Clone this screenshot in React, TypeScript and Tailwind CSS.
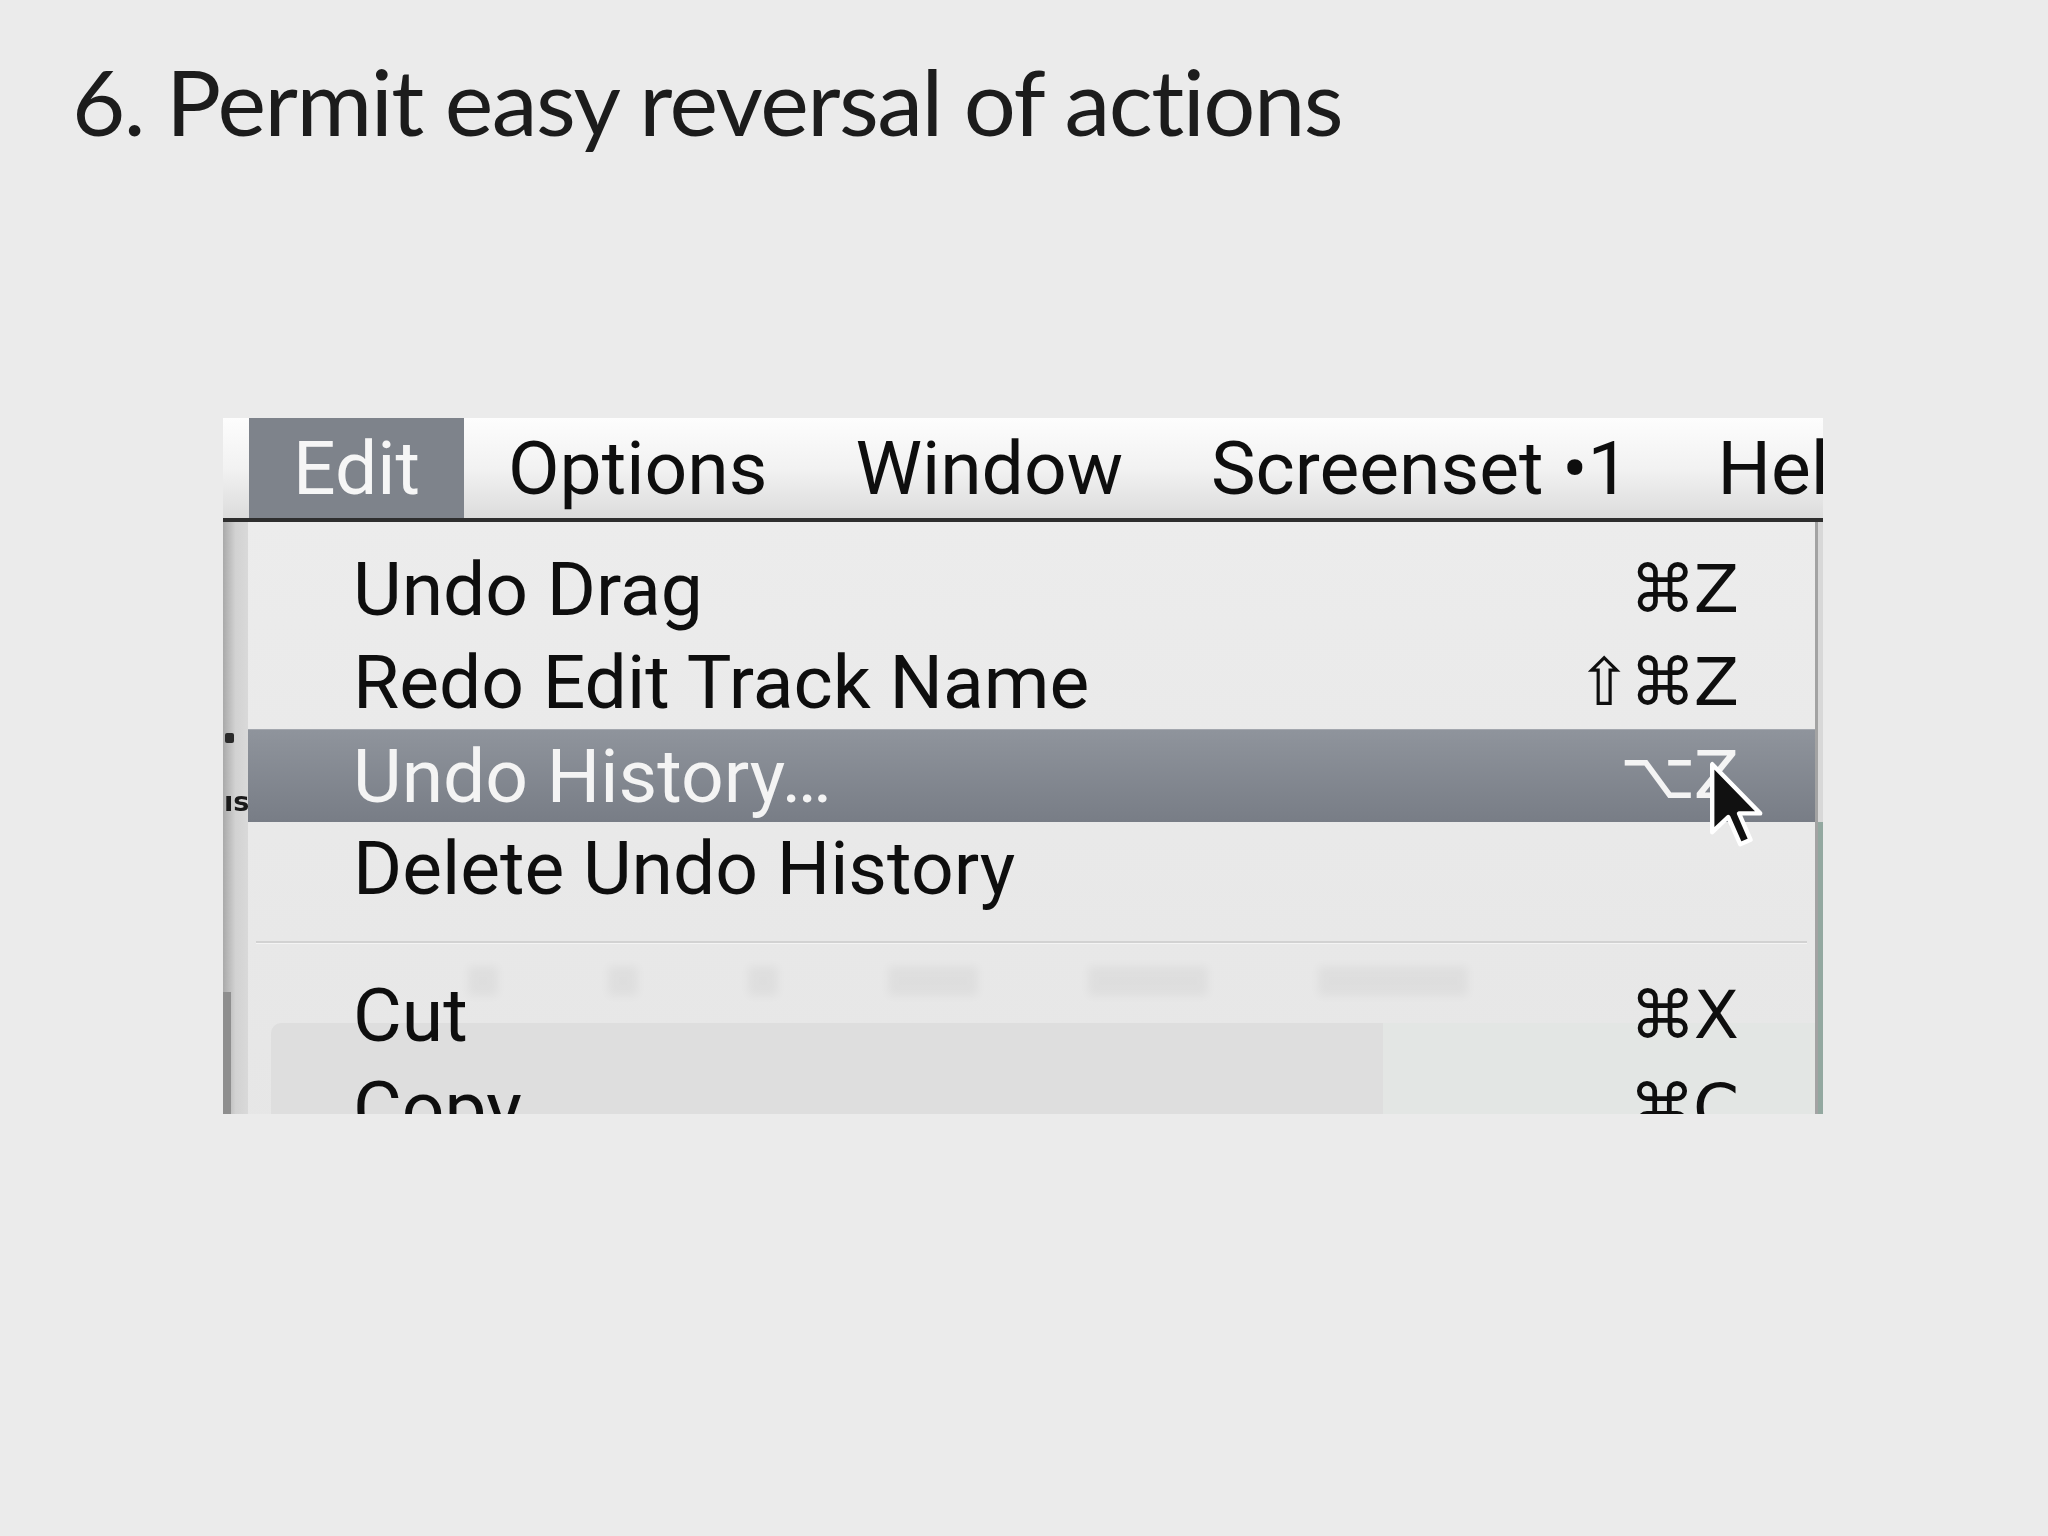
import React from "react";

const menuFont = "font-['Roboto','Liberation_Sans',sans-serif] font-normal";
const keyFont = "font-['DejaVu_Sans','Liberation_Sans',sans-serif]";

function Row({
  label,
  keys,
  active = false,
}: {
  label: string;
  keys?: string;
  active?: boolean;
}) {
  return (
    <div
      className={
        "h-[93px] flex items-center pl-[105px] pr-[78px] " +
        (active
          ? "bg-gradient-to-b from-[#8f949c] to-[#787d86] border-t border-[#a3a7ae] text-[#f4f4f4]"
          : "text-[#0e0e0e]")
      }
    >
      <span className={`${menuFont} text-[75px] leading-none flex-1 whitespace-nowrap`}>{label}</span>
      {keys && (
        <span className={`${keyFont} text-[66px] leading-none whitespace-nowrap tracking-[-2px]`}>{keys}</span>
      )}
    </div>
  );
}

function Cursor() {
  return (
    <svg
      className="absolute left-[1486px] top-[343px]"
      width="56"
      height="90"
      viewBox="-0.8 -0.8 14 22.5"
    >
      <path
        d="M0 0 L0 17 L4 13.2 L7 20 L9.6 18.9 L6.7 12.3 L12 12.3 Z"
        fill="#111"
        stroke="#fff"
        strokeWidth="1.1"
        strokeLinejoin="round"
      />
    </svg>
  );
}

export default function App() {
  return (
    <div className="w-[2048px] h-[1536px] bg-[#ebebeb] overflow-hidden">
      <h1 className="pl-[72px] pt-[55px] text-[92px] leading-none font-['Lato','Open_Sans',sans-serif] font-normal text-[#1c1c1c] tracking-[-1.5px] whitespace-nowrap">
        6. Permit easy reversal of actions
      </h1>

      <div className="ml-[223px] mt-[271px] w-[1600px] h-[696px] overflow-hidden relative flex flex-col blur-[0.5px]">
        {/* menu bar */}
        <div className="h-[104px] shrink-0 flex items-stretch bg-gradient-to-b from-[#fdfdfd] via-[#f2f2f2] to-[#dcdcdc] border-b-[4px] border-[#2e2e2e] pl-[26px]">
          <div className={`${menuFont} text-[75px] leading-none flex items-center px-[44px] bg-[#7e838b] text-[#f6f6f6]`}>
            Edit
          </div>
          {["Options", "Window", "Screenset \u20221", "Help"].map((t) => (
            <div
              key={t}
              className={`${menuFont} text-[75px] leading-none flex items-center px-[44px] text-[#0e0e0e] whitespace-nowrap`}
            >
              {t}
            </div>
          ))}
        </div>

        {/* content row */}
        <div className="flex-1 flex">
          {/* window behind, left edge */}
          <div className="w-[25px] shrink-0 relative bg-gradient-to-r from-[#a9a9a9] via-[#d2d2d2] to-[#d9d9d9]">
            <div className="absolute left-[2px] top-[211px] w-[9px] h-[10px] bg-[#2a2a2a] rounded-[2px]" />
            <span className="absolute left-[1px] top-[266px] font-['DejaVu_Sans',sans-serif] font-bold text-[27px] leading-none text-[#1a1a1a]">
              ıs
            </span>
            <div className="absolute left-0 top-[470px] w-[8px] h-[200px] bg-[#8e8e8e]" />
          </div>

          {/* dropdown panel */}
          <div className="flex-1 relative bg-gradient-to-b from-[#ececec] to-[#e6e6e6] pt-[21px]">
            {/* ghost of the window behind */}
            <div className="absolute left-[23px] right-[432px] top-[501px] bottom-0 bg-[#dedede] rounded-tl-[10px]" />
            <div className="absolute right-0 w-[432px] top-[501px] bottom-0 bg-[#e3e6e4]" />
            <div className="absolute left-[220px] right-[150px] top-[444px] h-[30px] flex gap-[110px] opacity-[0.035] blur-[5px]">
              <div className="w-[30px] h-full bg-black" />
              <div className="w-[30px] h-full bg-black" />
              <div className="w-[30px] h-full bg-black" />
              <div className="w-[90px] h-full bg-black" />
              <div className="w-[120px] h-full bg-black" />
              <div className="w-[150px] h-full bg-black" />
            </div>

            <div className="relative">
              <Row label="Undo Drag" keys={"\u2318Z"} />
              <Row label="Redo Edit Track Name" keys={"\u21E7\u2318Z"} />
              <Row label="Undo History…" keys={"\u2325Z"} active />
              <Row label="Delete Undo History" />
              <div className="h-[54px] flex items-center px-[8px]">
                <div className="w-full h-[3px] bg-[#d2d2d2] border-b border-[#f4f4f4]" />
              </div>
              <Row label="Cut" keys={"\u2318X"} />
              <Row label="Copy" keys={"\u2318C"} />
            </div>
          </div>

          {/* right edge */}
          <div className="w-[8px] shrink-0 flex flex-col border-l-[3px] border-[#a3a3a3]">
            <div className="h-[300px] bg-[#d8d8d8]" />
            <div className="flex-1 bg-[#93a8a0]" />
          </div>
        </div>

        <Cursor />
      </div>
    </div>
  );
}
